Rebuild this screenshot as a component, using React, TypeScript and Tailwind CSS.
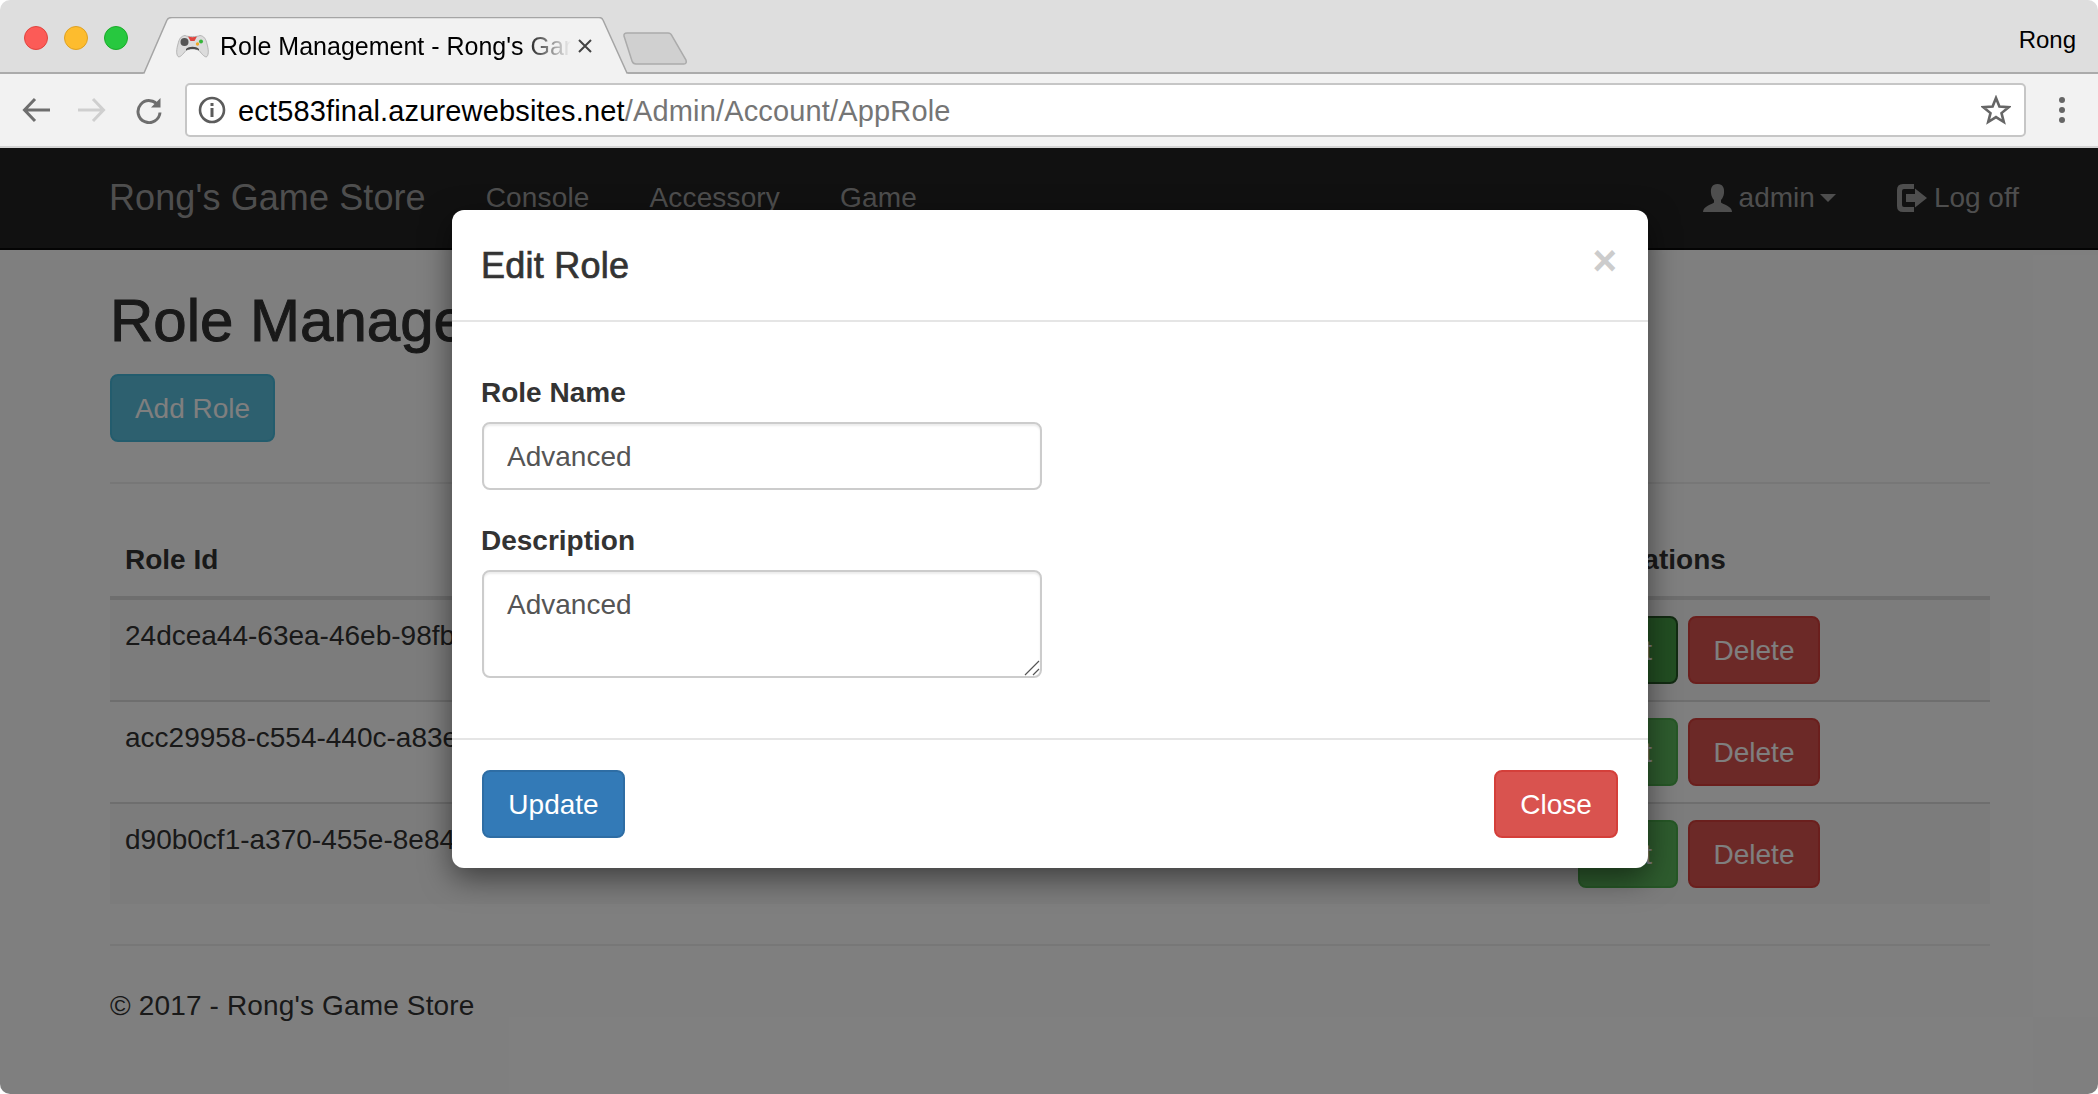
import { ReactNode } from "react";

type RoleRow = { id: string; name: string; description: string; active?: boolean };

const ROWS: RoleRow[] = [
  { id: "24dcea44-63ea-46eb-98fb-3a71c0d25e19", name: "Advanced", description: "Advanced", active: true },
  { id: "acc29958-c554-440c-a83e-91f7b26d04ac", name: "Basic", description: "Basic" },
  { id: "d90b0cf1-a370-455e-8e84-5c2fa17be630", name: "Admin", description: "Admin" },
];

function Btn({ cls, children }: { cls: string; children: ReactNode }) {
  return (
    <button type="button" className={`h-[68px] rounded-[8px] border-2 pt-[1px] text-center text-[28px] leading-[40px] text-white ${cls}`}>
      {children}
    </button>
  );
}

function GamepadIcon() {
  return (
    <svg width="33" height="24" viewBox="0 0 33 24">
      <path d="M9 1.5 C12 3 21 3 24 1.5 C28 2 30 5 31 10 C32.5 15 33 20 31 22.5 C29 24 26 20 23 16.5 C20 14.5 13 14.5 10 16.5 C7 20 4 24 2 22.5 C0 20 .5 15 2 10 C3 5 5 2 9 1.5 Z" fill="#dcdcdc" stroke="#a8a8a8" strokeWidth="0.8" />
      <circle cx="8.5" cy="8" r="4" fill="#555" />
      <path d="M12 2.5 C15 3.5 18 3.5 21 2.5 L18.5 7 L14.5 7 Z" fill="#e0443e" />
      <circle cx="25" cy="7.5" r="2" fill="#35b53a" />
      <circle cx="21.5" cy="10" r="1.7" fill="#f0a828" />
      <path d="M10 15 C13 12 20 12 23 15 L23 16.5 C20 14.5 13 14.5 10 16.5 Z" fill="#4a4a4a" />
    </svg>
  );
}

function BrowserChrome() {
  return (
    <>
      {/* tab strip */}
      <div className="flex h-[74px] shrink-0 items-start border-b-2 border-[#ababab] bg-[#dedede]">
        <div className="mt-[26px] ml-[24px] flex gap-[16px]">
          <span className="h-[24px] w-[24px] rounded-full border border-[#e0443e] bg-[#fc5b57]" />
          <span className="h-[24px] w-[24px] rounded-full border border-[#dea123] bg-[#fdbc2e]" />
          <span className="h-[24px] w-[24px] rounded-full border border-[#1aab29] bg-[#27c83f]" />
        </div>
        <div className="relative mt-[17px] ml-[15px] flex h-[57px] w-[485px] items-center">
          <svg className="absolute inset-0" width="485" height="57" viewBox="0 0 485 57">
            <path d="M0 56 L1 56 L24 3 Q25 0.5 29 0.5 L456 0.5 Q459 0.5 460 3 L484 56 L485 56 L485 57 L0 57 Z" fill="#f2f2f2" />
            <path d="M0 56 L1 56 L24 3 Q25 0.5 29 0.5 L456 0.5 Q459 0.5 460 3 L484 56 L485 56" fill="none" stroke="#a5a5a5" strokeWidth="1.5" />
          </svg>
          <div className="relative ml-[33px] flex items-center">
            <GamepadIcon />
            <span className="ml-[11px] w-[351px] overflow-hidden text-[25px] leading-[30px] whitespace-nowrap text-black [mask-image:linear-gradient(to_right,black_86%,transparent)]">
              Role Management - Rong's Game Store
            </span>
            <svg className="ml-[6px]" width="16" height="16" viewBox="0 0 16 16">
              <path d="M2 2 L14 14 M14 2 L2 14" stroke="#444" strokeWidth="2" />
            </svg>
          </div>
        </div>
        <svg className="mt-[32px] -ml-[6px]" width="66" height="34" viewBox="0 0 66 34">
          <path d="M2 4 Q1.5 1 5 1 L46 1 Q49 1 50 4 L64 28 Q65 32 62 32 L14 32 Q11 32 10 29 Z" fill="#d0d0d0" stroke="#ababab" strokeWidth="1.5" />
        </svg>
        <span className="mt-[25px] mr-[22px] ml-auto text-[24px] leading-[30px] text-black">Rong</span>
      </div>

      {/* toolbar */}
      <div className="flex h-[74px] shrink-0 items-center border-b-2 border-[#d4d4d4] bg-[#f2f2f2]">
        <svg className="ml-[22px]" width="28" height="26" viewBox="0 0 28 26" fill="none" stroke="#6e6e6e" strokeWidth="3">
          <path d="M28 13 H3 M13 2 L2.5 13 L13 24" />
        </svg>
        <svg className="ml-[28px]" width="28" height="26" viewBox="0 0 28 26" fill="none" stroke="#cfcfcf" strokeWidth="3">
          <path d="M0 13 H25 M15 2 L25.5 13 L15 24" />
        </svg>
        <svg className="ml-[29px]" width="28" height="27" viewBox="0 0 28 27" fill="none" stroke="#6e6e6e" strokeWidth="3">
          <path d="M23.5 9 A11 11 0 1 0 25 15.5" />
          <path d="M25.5 1 V10.5 H16" fill="#6e6e6e" stroke="none" />
        </svg>
        <div className="ml-[22px] flex h-[54px] w-[1841px] items-center rounded-[5px] border-2 border-[#c6c6c6] bg-white">
          <svg className="ml-[11px]" width="28" height="28" viewBox="0 0 28 28" fill="none">
            <circle cx="14" cy="14" r="12" stroke="#5c5c5c" strokeWidth="2.6" />
            <rect x="12.5" y="7" width="3" height="3" fill="#5c5c5c" />
            <rect x="12.5" y="12" width="3" height="9" fill="#5c5c5c" />
          </svg>
          <span className="mt-[1px] ml-[12px] text-[29px] leading-[40px] tracking-[0.16px] whitespace-nowrap text-black">
            ect583final.azurewebsites.net<span className="text-[#757575]">/Admin/Account/AppRole</span>
          </span>
          <svg className="mr-[13px] ml-auto" width="30" height="30" viewBox="0 0 30 30" fill="none" stroke="#666" strokeWidth="2.6" strokeLinejoin="miter">
            <path d="M15 3 L18.4 11.6 L27.6 12.2 L20.5 18.1 L22.8 27 L15 22.1 L7.2 27 L9.5 18.1 L2.4 12.2 L11.6 11.6 Z" />
          </svg>
        </div>
        <div className="ml-[33px] flex flex-col gap-[4px]">
          <span className="h-[6px] w-[6px] rounded-full bg-[#666]" />
          <span className="h-[6px] w-[6px] rounded-full bg-[#666]" />
          <span className="h-[6px] w-[6px] rounded-full bg-[#666]" />
        </div>
      </div>
    </>
  );
}

function Navbar() {
  return (
    <div className="flex h-[102px] items-center border-b-2 border-[#080808] bg-[#222] pr-[79px] pl-[109px] text-[#9d9d9d]">
      <span className="text-[36px] leading-[40px] tracking-[0.1px]">Rong's Game Store</span>
      <nav className="ml-[60px] flex gap-[60px] text-[28px] leading-[40px] tracking-[0.15px]">
        <span>Console</span>
        <span>Accessory</span>
        <span>Game</span>
      </nav>
      <div className="ml-auto flex items-center text-[28px] leading-[40px]">
        <svg width="29" height="28" viewBox="0 0 29 28" fill="#9d9d9d">
          <path d="M14.5 0 C20 0 21.5 4 21 9 C20.7 12 19.5 14.5 18 16 L18 18.5 C20 20.5 29 22 29 28 L0 28 C0 22 9 20.5 11 18.5 L11 16 C9.5 14.5 8.3 12 8 9 C7.5 4 9 0 14.5 0 Z" />
        </svg>
        <span className="ml-[7px]">admin</span>
        <svg className="ml-[5px]" width="16" height="8" viewBox="0 0 16 8" fill="#9d9d9d">
          <path d="M0 0 H16 L8 8 Z" />
        </svg>
        <svg className="ml-[61px]" width="30" height="28" viewBox="0 0 30 28" fill="#9d9d9d">
          <path d="M6 0 H17 V5 H7 Q5 5 5 7 V21 Q5 23 7 23 H17 V28 H6 Q0 28 0 22 V6 Q0 0 6 0 Z" />
          <path d="M9 10 H18 V4.5 L30 14 L18 23.5 V18 H9 Z" />
        </svg>
        <span className="ml-[7px]">Log off</span>
      </div>
    </div>
  );
}

function RoleTable() {
  const cols = "grid grid-cols-[560px_500px_392px_428px]";
  return (
    <div>
      <div className={`${cols} border-b-4 border-[#ddd] font-bold`}>
        <div className="p-[16px] pl-[15px]">Role Id</div>
        <div className="p-[16px]">Role Name</div>
        <div className="p-[16px]">Description</div>
        <div className="p-[16px]">Operations</div>
      </div>
      {ROWS.map((r, i) => (
        <div key={r.id} className={`${cols} ${i > 0 ? "border-t-2 border-[#ddd]" : ""} ${i % 2 === 0 ? "bg-[#f9f9f9]" : ""}`}>
          <div className="p-[16px] pl-[15px]">{r.id}</div>
          <div className="p-[16px]">{r.name}</div>
          <div className="p-[16px]">{r.description}</div>
          <div className="flex gap-[10px] p-[16px]">
            <Btn cls={`w-[100px] ${r.active ? "border-[#255625] bg-[#449d44]" : "border-[#4cae4c] bg-[#5cb85c]"}`}>Edit</Btn>
            <Btn cls="w-[132px] border-[#d43f3a] bg-[#d9534f]">Delete</Btn>
          </div>
        </div>
      ))}
    </div>
  );
}

function EditRoleModal() {
  const inputCls =
    "block w-[560px] rounded-[8px] border-2 border-[#ccc] bg-white pt-[13px] pr-[24px] pb-[11px] pl-[23px] text-[28px] leading-[40px] text-[#555] shadow-[inset_0_2px_2px_rgba(0,0,0,0.075)] outline-none";
  return (
    <div className="absolute top-[62px] left-[452px] w-[1196px] rounded-[12px] bg-white text-[#333] shadow-[0_10px_30px_rgba(0,0,0,0.5)]">
      <div className="flex items-start justify-between border-b-2 border-[#e5e5e5] px-[30px] pt-[36px] pb-[34px]">
        <h4 className="-ml-[1px] text-[36px] leading-[40px] font-medium tracking-[0.25px] [-webkit-text-stroke:0.7px_#333]">Edit Role</h4>
        <span className="mt-[-6px] mr-[1px] text-[42px] leading-[42px] font-bold text-[#ccc]">×</span>
      </div>
      <div className="px-[30px] pt-[50px] pb-[60px]">
        <label className="-ml-[1px] mb-[10px] block pt-[1px] leading-[39px] font-bold">Role Name</label>
        <input className={`${inputCls} mb-[30px] h-[68px]`} defaultValue="Advanced" />
        <label className="-ml-[1px] mb-[10px] block pt-[1px] leading-[39px] font-bold">Description</label>
        <div className="relative w-[560px]">
          <textarea className={`${inputCls} h-[108px] resize-none`} defaultValue="Advanced" />
          {/* resize grip */}
          <svg className="absolute right-[2px] bottom-[2px]" width="16" height="16" viewBox="0 0 16 16" stroke="#555" strokeWidth="1.2">
            <path d="M1 15 L15 1 M9 15 L15 9" />
          </svg>
        </div>
      </div>
      <div className="flex justify-between border-t-2 border-[#e5e5e5] p-[30px]">
        <Btn cls="w-[143px] border-[#2e6da4] bg-[#337ab7]">Update</Btn>
        <Btn cls="w-[124px] border-[#d43f3a] bg-[#d9534f]">Close</Btn>
      </div>
    </div>
  );
}

export default function App() {
  return (
    <div className="flex h-[1094px] w-[2098px] flex-col overflow-hidden rounded-[10px] bg-white font-['Liberation_Sans',Arial,sans-serif] text-[28px] leading-[40px] text-[#333]">
      <BrowserChrome />
      <div className="relative flex-1 overflow-hidden">
        <Navbar />
        <main className="pt-[38px] pr-[108px] pl-[110px]">
          <h2 className="mb-[20px] text-[60px] leading-[66px] font-medium [-webkit-text-stroke:1px_#333]">Role Management</h2>
          <Btn cls="w-[165px] border-[#46b8da] bg-[#5bc0de]">Add Role</Btn>
          <hr className="my-[40px] border-t-2 border-[#eee]" />
          <RoleTable />
          <hr className="my-[40px] border-t-2 border-[#eee]" />
          <footer className="tracking-[0.15px]">© 2017 - Rong's Game Store</footer>
        </main>
        {/* backdrop + dialog */}
        <div className="absolute inset-0 bg-black/50" />
        <EditRoleModal />
      </div>
    </div>
  );
}
